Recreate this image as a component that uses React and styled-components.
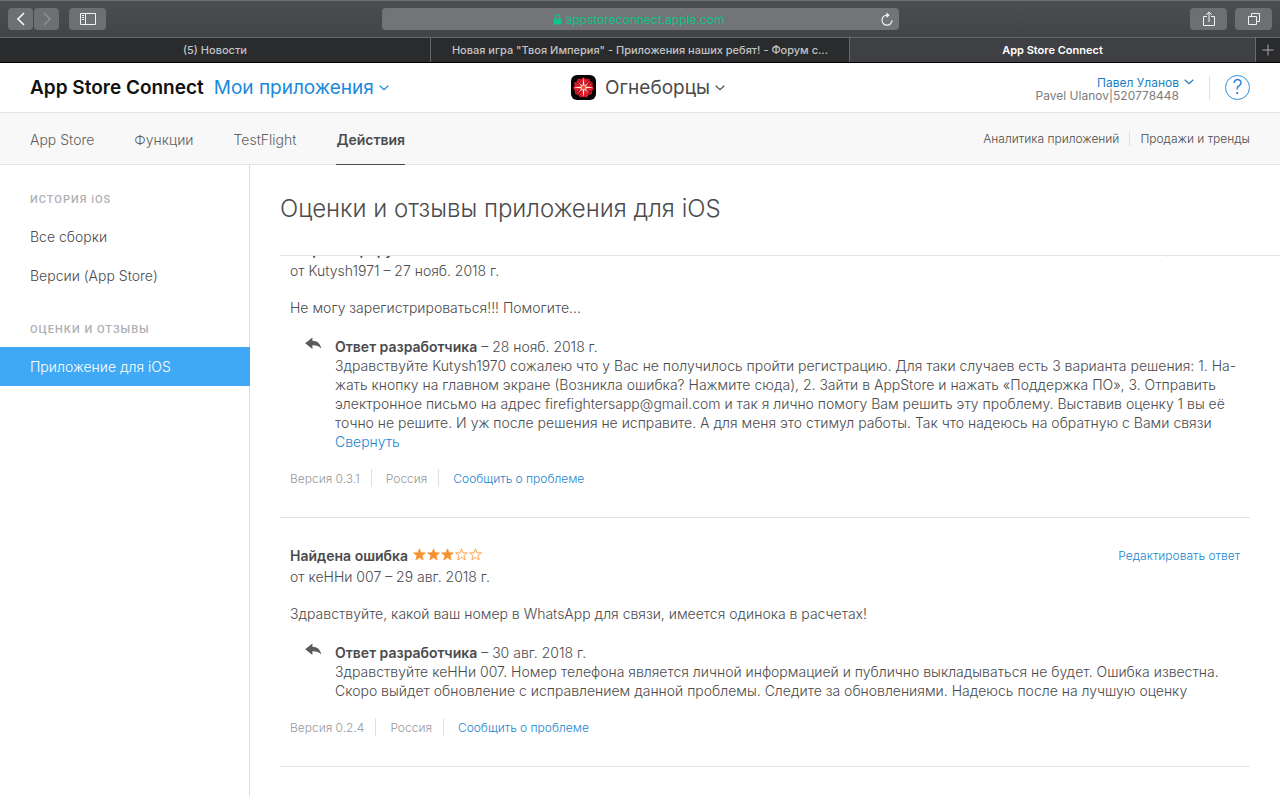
import React, { useLayoutEffect, useRef } from "react";
import styled, { createGlobalStyle, css } from "styled-components";

const Global = createGlobalStyle`
  *, *::before, *::after { box-sizing: border-box; }
  body {
    margin: 0;
    background: #fff;
    color: #4b4b4d;
    font-family: Inter, "Liberation Sans", sans-serif;
    font-size: 14px;
    font-weight: 300;
  }
  button, input { font: inherit; }
  button { border: 0; padding: 0; background: none; color: inherit; cursor: pointer; }
  a { color: inherit; text-decoration: none; }
  h1, h2, h3, p, ul { margin: 0; padding: 0; font-weight: inherit; }
  ul { list-style: none; }
`;

const Shell = styled.div`
  display: flex;
  flex-direction: column;
  height: 100vh;
  min-width: 1000px;
`;

/* Browser chrome */
const Toolbar = styled.div`
  display: flex;
  align-items: center;
  justify-content: space-between;
  height: 38px;
  padding: 0 8px;
  border-top: 1px solid #6c7072;
  border-bottom: 1px solid #66686b;
  background: linear-gradient(#4b4e51, #424548);
  flex: none;
`;

const ToolGroup = styled.div`
  display: flex;
  flex: 1;
  justify-content: ${(p) => (p.$end ? "flex-end" : "flex-start")};
  gap: ${(p) => (p.$end ? "8px" : "10px")};
`;

const ButtonPair = styled.div`
  display: flex;
  gap: 1px;
`;

const ToolButton = styled.button`
  display: grid;
  place-items: center;
  width: ${(p) => (p.$wide ? "37px" : "25px")};
  height: 22px;
  border-radius: 4px;
  background: #6d7073;
  color: ${(p) => (p.$dim ? "#8e9092" : "#f2f2f2")};
`;

const AddressBar = styled.div`
  display: flex;
  align-items: center;
  flex: none;
  width: 517px;
  height: 22px;
  padding: 0 5px 0 171px;
  border-radius: 4px;
  background: #727477;
  color: #0fc487;
`;

const Address = styled.input`
  flex: 1;
  min-width: 0;
  margin-left: 4px;
  padding: 0;
  border: 0;
  outline: 0;
  background: none;
  color: inherit;
  font-size: 12px;
  font-weight: 400;
`;

const ReloadButton = styled.button`
  display: flex;
  color: #f2f2f2;
`;

const TabStrip = styled.div`
  display: flex;
  height: 25px;
  border-bottom: 1px solid #000;
  background: #2a2b2d;
  flex: none;
`;

const Tab = styled.button`
  flex: ${(p) => p.$grow} 1 0;
  border-right: 1px solid #66686b;
  background: ${(p) => (p.$active ? "#3e4043" : "transparent")};
  color: ${(p) => (p.$active ? "#fff" : "#c2c3c4")};
  font-size: 11px;
  font-weight: ${(p) => (p.$active ? 600 : 500)};
`;

const NewTab = styled.button`
  display: grid;
  place-items: center;
  width: 24px;
  color: #a9aaab;
`;

/* Site header */
const Header = styled.header`
  display: grid;
  grid-template-columns: 1fr auto 1fr;
  align-items: center;
  height: 50px;
  padding: 0 30px;
  border-bottom: 1px solid #e3e3e3;
  flex: none;
`;

const Brand = styled.div`
  display: flex;
  align-items: center;
  gap: 10px;
  font-size: 19px;
  white-space: nowrap;
`;

const BrandName = styled.a`
  color: #111;
  font-weight: 600;
`;

const MenuButton = styled.button`
  display: flex;
  align-items: center;
  gap: 5px;
  color: ${(p) => (p.$blue ? "#1a89dc" : "#4b4b4d")};
  font-size: 19px;
  font-weight: 400;
`;

const AppPicker = styled.div`
  padding-left: 16px;
`;

const AppIcon = styled.svg`
  margin-right: 4px;
`;

const Account = styled.div`
  display: flex;
  align-items: center;
  justify-content: flex-end;
  gap: 15px;
`;

const AccountButton = styled.button`
  display: grid;
  grid-template-columns: auto auto;
  column-gap: 5px;
  align-items: center;
  justify-items: end;
  padding-top: 2px;
  color: #1a7fc4;
  font-size: 12px;
  font-weight: 400;
  line-height: 13px;
`;

const AccountId = styled.span`
  color: #7c7c7e;
`;

const Rule = styled.span`
  width: 1px;
  height: ${(p) => p.$h}px;
  background: #e0e0e0;
`;

const HelpButton = styled.button`
  width: 25px;
  height: 25px;
  border: 1px solid #3390d8;
  border-radius: 50%;
  color: #1a7fd0;
  font-size: 20px;
  line-height: 23px;
`;

const Nav = styled.nav`
  display: flex;
  align-items: stretch;
  justify-content: space-between;
  height: 52px;
  padding: 0 30px;
  border-bottom: 1px solid #e3e3e3;
  background: #f8f8f8;
  flex: none;
`;

const NavTabs = styled.div`
  display: flex;
  gap: 40px;
`;

const NavTab = styled.a`
  display: flex;
  align-items: center;
  padding-top: 2px;
  ${(p) =>
    p.$active
      ? css`
          font-weight: 600;
          margin-bottom: -1px;
          border-bottom: 1px solid #4b4b4d;
        `
      : css`
          color: #5f5f61;
        `}
`;

const NavLinks = styled.div`
  display: flex;
  align-items: center;
  gap: 10px;
  font-size: 12px;
`;

/* Body */
const Body = styled.div`
  display: flex;
  flex: 1;
  min-height: 0;
  padding-bottom: 4px;
`;

const Sidebar = styled.aside`
  width: 250px;
  padding-top: 21px;
  border-right: 1px solid #dedede;
  flex: none;
`;

const SideHeading = styled.h2`
  padding: 7px 30px 10px;
  color: #b0b0b2;
  font-family: Roboto, "Liberation Sans", sans-serif;
  font-size: 11px;
  font-weight: 500;
  letter-spacing: 1px;
  line-height: 14px;
`;

const SideList = styled.ul`
  margin: 0 -1px 21px 0;
`;

const SideLink = styled.a`
  display: block;
  padding: 0 30px;
  line-height: 39px;
  ${(p) => p.$active && "background: #3fa9f5; color: #fff;"}
`;

const Main = styled.main`
  display: flex;
  flex-direction: column;
  flex: 1;
  min-width: 0;
  padding-left: 30px;
`;

const Title = styled.h1`
  padding: 28px 0 31px;
  border-bottom: 1px solid #e3e3e3;
  font-size: 24px;
  line-height: 31px;
`;

const Reviews = styled.div`
  flex: 1;
  min-height: 0;
  padding: 0 30px 60px 0;
  overflow-y: auto;
  scrollbar-width: none;
`;

const Review = styled.article`
  padding: 26px 10px 28px;
  border-bottom: 1px solid #e3e3e3;
`;

const ReviewTop = styled.div`
  display: flex;
  align-items: center;
  justify-content: space-between;
  line-height: 23px;
`;

const ReviewTitle = styled.h2`
  display: flex;
  align-items: center;
  gap: 5px;
  font-size: 14px;
  font-weight: 600;
`;

const Stars = styled.span`
  display: flex;
  gap: 1px;
  padding-bottom: 2px;
  color: #f7912e;
`;

const Line = styled.p`
  margin-bottom: ${(p) => (p.$gap ? "18px" : "0")};
  line-height: 19px;
`;

const Reply = styled.div`
  display: flex;
  margin: 20px 0 16px;
  padding-left: 15px;
  line-height: 19px;

  svg { flex: none; margin-right: 13px; }
`;

const ReplyTitle = styled.strong`
  font-weight: 600;
`;

const Link = styled.a`
  color: #1a86d0;
  font-size: ${(p) => (p.$small ? "12px" : "14px")};
`;

const Footer = styled.footer`
  display: flex;
  align-items: center;
  height: 22px;
  color: #99999b;
  font-size: 12px;

  > * + * { margin-left: 14px; }
  > ${Rule} { margin-left: 11px; }
`;

const Chevron = () => (
  <svg width="10" height="6" viewBox="0 0 10 6" fill="none" stroke="currentColor" strokeWidth="1.2" aria-hidden="true">
    <path d="M.7.8 5 4.8 9.3.8" />
  </svg>
);

const Star = ({ filled }) => (
  <svg width="13" height="13" viewBox="0 0 13 13" fill={filled ? "currentColor" : "none"} stroke="currentColor" strokeWidth=".8" aria-hidden="true">
    <path d="M6.5.9 7.9 4.8 12.4 4.9 8.9 7.6 10.2 11.9 6.5 9.4 2.8 11.9 4.1 7.6.6 4.9 5.1 4.8Z" />
  </svg>
);

const ReplyArrow = () => (
  <svg width="17" height="14" viewBox="0 0 17 14" fill="#5a5a5c" aria-hidden="true">
    <path d="M.2 6.2 7.4.5V3.8C11.8 3.9 15.3 6 16.2 11.6 14 8.9 11.3 8.2 7.4 8.3V12Z" />
  </svg>
);

const GameIcon = () => (
  <AppIcon width="25" height="25" viewBox="0 0 25 25" aria-hidden="true">
    <rect width="25" height="25" rx="6" fill="#090303" />
    <circle cx="12.5" cy="12.5" r="9.6" fill="#a8101e" />
    <path d="M12.5 2 14.5 5 18.5 3.7 18.8 6.7 22 8 20.4 11 23 13.5 20.6 15.5 21 19 17.5 19.2 16 22.6 12.5 21 9 22.6 7.7 19.2 4 19 4.6 15.5 2 13 4.5 10.5 3 7.5 6.3 6.7 6.6 3.6 10.3 5Z" fill="#e0202f" />
    <path d="m7.5 5 3 4.5M17.5 5l-3 4.5M7.5 20l3-4.5M17.5 20l3-4.5M5 7.5l4.5 3M20 7.5l-4.5 3M5 17.5l4.5-3M20 17.5l-4.5-3" stroke="#5c0710" strokeWidth=".8" />
    <path d="m7.5 7.5 4.2 3 .8-8 .8 8 4.2-3-3 4.2 8 .8-8 .8 3 4.2-4.2-3-.8 8-.8-8-4.2 3 3-4.2-8-.8 8-.8Z" fill="#ffc4b4" />
    <path d="M12.5 3 13.4 11.6 22 12.5 13.4 13.4 12.5 22 11.6 13.4 3 12.5 11.6 11.6Z" fill="#fff0e5" />
    <circle cx="12.5" cy="12.5" r="2" fill="#e8542f" />
  </AppIcon>
);

const reviews = [
  {
    title: "Не регистрирует",
    rating: 0,
    by: "от Kutysh1971 – 27 нояб. 2018 г.",
    text: "Не могу зарегистрироваться!!! Помогите...",
    replied: "28 нояб. 2018 г.",
    reply: [
      "Здравствуйте Kutysh1970 сожалею что у Вас не получилось пройти регистрацию. Для таки случаев есть 3 варианта решения: 1. На-",
      "жать кнопку на главном экране (Возникла ошибка? Нажмите сюда), 2. Зайти в AppStore и нажать «Поддержка ПО», 3. Отправить",
      "электронное письмо на адрес firefightersapp@gmail.com и так я лично помогу Вам решить эту проблему. Выставив оценку 1 вы её",
      "точно не решите. И уж после решения не исправите. А для меня это стимул работы. Так что надеюсь на обратную с Вами связи",
    ],
    collapsible: true,
    version: "Версия 0.3.1",
  },
  {
    title: "Найдена ошибка",
    rating: 3,
    by: "от кеННи 007 – 29 авг. 2018 г.",
    text: "Здравствуйте, какой ваш номер в WhatsApp для связи, имеется одинока в расчетах!",
    replied: "30 авг. 2018 г.",
    reply: [
      "Здравствуйте кеННи 007. Номер телефона является личной информацией и публично выкладываться не будет. Ошибка известна.",
      "Скоро выйдет обновление с исправлением данной проблемы. Следите за обновлениями. Надеюсь после на лучшую оценку",
    ],
    version: "Версия 0.2.4",
  },
];

function ReviewItem({ review }) {
  return (
    <Review>
      <ReviewTop>
        <ReviewTitle>
          {review.title}
          {review.rating > 0 && (
            <Stars role="img" aria-label={`${review.rating} / 5`}>
              {[1, 2, 3, 4, 5].map((n) => (
                <Star key={n} filled={n <= review.rating} />
              ))}
            </Stars>
          )}
        </ReviewTitle>
        <Link href="#edit" $small>Редактировать ответ</Link>
      </ReviewTop>
      <Line $gap>{review.by}</Line>
      <Line>{review.text}</Line>
      <Reply>
        <ReplyArrow />
        <div>
          <Line>
            <ReplyTitle>Ответ разработчика</ReplyTitle> – {review.replied}
          </Line>
          {review.reply.map((line) => (
            <Line key={line}>{line}</Line>
          ))}
          {review.collapsible && <Link href="#collapse">Свернуть</Link>}
        </div>
      </Reply>
      <Footer>
        <span>{review.version}</span>
        <Rule $h={18} />
        <span>Россия</span>
        <Rule $h={18} />
        <Link href="#report" $small>Сообщить о проблеме</Link>
      </Footer>
    </Review>
  );
}

export default function App() {
  const list = useRef(null);
  useLayoutEffect(() => {
    list.current.scrollTop = 44;
  }, []);

  return (
    <Shell>
      <Global />
      <Toolbar>
        <ToolGroup>
          <ButtonPair>
            <ToolButton aria-label="Назад">
              <svg width="10" height="14" viewBox="0 0 10 14" fill="none" stroke="currentColor" strokeWidth="1.7"><path d="M8 1 2 7l6 6" /></svg>
            </ToolButton>
            <ToolButton $dim aria-label="Вперёд">
              <svg width="10" height="14" viewBox="0 0 10 14" fill="none" stroke="currentColor" strokeWidth="1.5"><path d="m2 1 6 6-6 6" /></svg>
            </ToolButton>
          </ButtonPair>
          <ToolButton $wide aria-label="Боковое меню">
            <svg width="16" height="12" viewBox="0 0 16 12" fill="none" stroke="currentColor"><path d="M.5.5h15v11H.5ZM5.5.5v11M2 2.5h2M2 4.5h2M2 6.5h2" /></svg>
          </ToolButton>
        </ToolGroup>
        <AddressBar>
          <svg width="9" height="11" viewBox="0 0 9 11" fill="currentColor" aria-hidden="true">
            <rect x=".5" y="4.5" width="8" height="6" rx="1" />
            <path d="M2.3 5V3a2.2 2.2 0 0 1 4.4 0v2" fill="none" stroke="currentColor" strokeWidth="1.2" />
          </svg>
          <Address aria-label="Адрес" defaultValue="appstoreconnect.apple.com" />
          <ReloadButton aria-label="Обновить">
            <svg width="14" height="15" viewBox="0 0 14 15" fill="none" stroke="currentColor" strokeWidth="1.2">
              <path d="M8.6 3.2H7a5 5 0 1 0 5 5" />
              <path d="M6.5.5 9.7 3.2 6.5 5.9Z" fill="currentColor" stroke="none" />
            </svg>
          </ReloadButton>
        </AddressBar>
        <ToolGroup $end>
          <ToolButton $wide aria-label="Поделиться">
            <svg width="12" height="16" viewBox="0 0 12 16" fill="none" stroke="currentColor"><path d="M4 5.5H.5v9h11v-9H8M6 11V1M3.2 3.8 6 1l2.8 2.8" /></svg>
          </ToolButton>
          <ToolButton $wide aria-label="Вкладки">
            <svg width="12" height="12" viewBox="0 0 12 12" fill="none" stroke="currentColor"><path d="M.5 3.5h8v8h-8ZM3.5 3.5v-3h8v8h-3" /></svg>
          </ToolButton>
        </ToolGroup>
      </Toolbar>
      <TabStrip>
        <Tab $grow={431}>(5) Новости</Tab>
        <Tab $grow={419}>Новая игра "Твоя Империя" - Приложения наших ребят! - Форум с...</Tab>
        <Tab $grow={406} $active>App Store Connect</Tab>
        <NewTab aria-label="Новая вкладка">
          <svg width="12" height="12" viewBox="0 0 12 12" stroke="currentColor"><path d="M6 .5v11M.5 6h11" /></svg>
        </NewTab>
      </TabStrip>

      <Header>
        <Brand>
          <BrandName href="#home">App Store Connect</BrandName>
          <MenuButton $blue>Мои приложения<Chevron /></MenuButton>
        </Brand>
        <AppPicker>
          <MenuButton><GameIcon />Огнеборцы<Chevron /></MenuButton>
        </AppPicker>
        <Account>
          <AccountButton>
            <span>Павел Уланов</span>
            <Chevron />
            <AccountId>Pavel Ulanov|520778448</AccountId>
          </AccountButton>
          <Rule $h={24} />
          <HelpButton aria-label="Справка">?</HelpButton>
        </Account>
      </Header>

      <Nav>
        <NavTabs>
          <NavTab href="#store">App Store</NavTab>
          <NavTab href="#features">Функции</NavTab>
          <NavTab href="#testflight">TestFlight</NavTab>
          <NavTab href="#activity" $active>Действия</NavTab>
        </NavTabs>
        <NavLinks>
          <a href="#analytics">Аналитика приложений</a>
          <Rule $h={15} />
          <a href="#sales">Продажи и тренды</a>
        </NavLinks>
      </Nav>

      <Body>
        <Sidebar>
          <SideHeading>ИСТОРИЯ iOS</SideHeading>
          <SideList>
            <li><SideLink href="#builds">Все сборки</SideLink></li>
            <li><SideLink href="#versions">Версии (App Store)</SideLink></li>
          </SideList>
          <SideHeading>ОЦЕНКИ И ОТЗЫВЫ</SideHeading>
          <SideList>
            <li><SideLink href="#ios" $active>Приложение для iOS</SideLink></li>
          </SideList>
        </Sidebar>
        <Main>
          <Title>Оценки и отзывы приложения для iOS</Title>
          <Reviews ref={list}>
            {reviews.map((r) => (
              <ReviewItem key={r.title} review={r} />
            ))}
          </Reviews>
        </Main>
      </Body>
    </Shell>
  );
}
